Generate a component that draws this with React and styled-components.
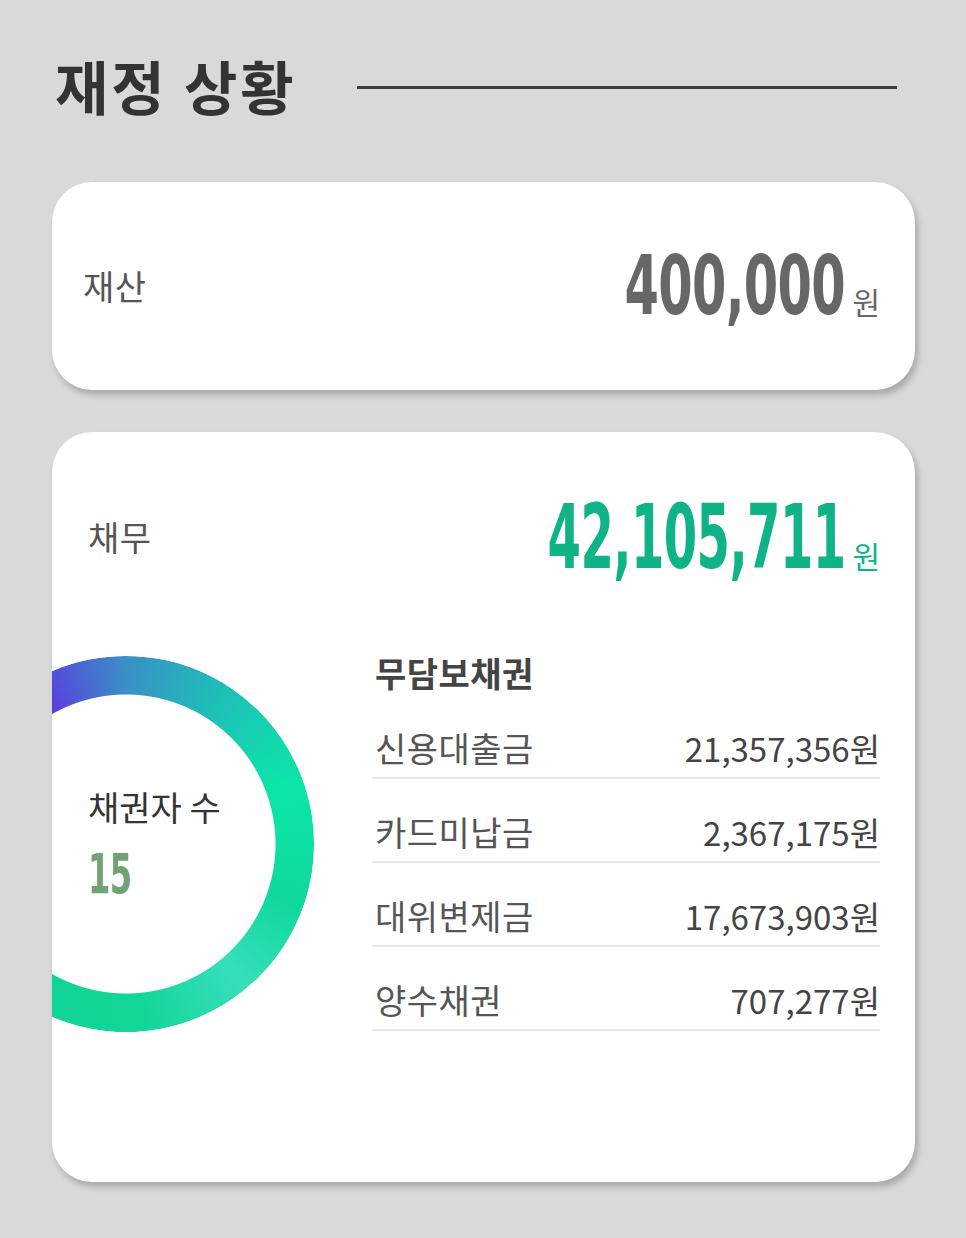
import React from "react";
import styled, { createGlobalStyle } from "styled-components";

const GlobalStyle = createGlobalStyle`
  body {
    margin: 0;
    background: #d9d9d9;
    font-family: "Noto Sans CJK KR", "Noto Sans", sans-serif;
  }
`;

const Page = styled.div`
  padding: 0 51px 60px 52px;
`;

const TitleRow = styled.div`
  display: flex;
  align-items: center;
  gap: 60px;
  padding: 50px 18px 0 3px;
  height: 70px;
`;

const Title = styled.h1`
  margin: 0;
  font-size: 58px;
  font-weight: 700;
  line-height: 70px;
  color: #333;
  letter-spacing: 3px;
`;

const TitleLine = styled.div`
  flex: 1;
  height: 3px;
  background: #3d3d3d;
  margin-top: 4px;
`;

const Card = styled.section`
  background: #fff;
  border-radius: 40px;
  box-shadow: 3px 5px 6px rgba(0, 0, 0, 0.22);
  overflow: hidden;
  box-sizing: border-box;
  height: ${(p) => p.height}px;
  margin-top: ${(p) => p.gap}px;
  padding: ${(p) => p.pad};
`;

const HeaderRow = styled.div`
  display: flex;
  justify-content: space-between;
  align-items: center;
  height: ${(p) => p.height || 70}px;
`;

const Label = styled.span`
  font-size: 34px;
  color: #555;
  line-height: 40px;
  letter-spacing: 0.5px;
`;

const Amount = styled.div`
  display: flex;
  align-items: baseline;
  color: ${(p) => p.color};
`;

const BigNumber = styled.span`
  display: inline-block;
  font-family: "DejaVu Sans Condensed", "DejaVu Sans", sans-serif;
  font-weight: 700;
  font-size: ${(p) => p.size}px;
  line-height: 1;
  letter-spacing: -1px;
  transform: scaleX(${(p) => p.sx});
  transform-origin: ${(p) => p.origin || "right"} center;
  color: ${(p) => p.color || "inherit"};
`;

const Won = styled.span`
  font-size: 30px;
  margin-left: 7px;
  line-height: 1;
`;

const Body = styled.div`
  display: grid;
  grid-template-columns: 376px 1fr;
  column-gap: 58px;
  margin: 79px 0 0 -150px;
`;

const Donut = styled.div`
  position: relative;
  width: 376px;
  height: 376px;
  margin-top: 5px;
  display: flex;
  flex-direction: column;
  justify-content: center;
  padding-left: 150px;
  box-sizing: border-box;
`;

const Ring = styled.div`
  position: absolute;
  inset: 0;
  border-radius: 50%;
  background: conic-gradient(
    from 0deg,
    #3a90c6 0deg,
    #1fbcb8 30deg,
    #0ce6a8 70deg,
    #10d89c 110deg,
    #36dfbb 140deg,
    #12d598 175deg,
    #10d496 215deg,
    #5b3ae0 330deg,
    #3a90c6 360deg
  );
  -webkit-mask: radial-gradient(circle, transparent 149px, #000 150px);
  mask: radial-gradient(circle, transparent 149px, #000 150px);
`;

const DonutLabel = styled.span`
  position: relative;
  font-size: 34px;
  color: #333;
  line-height: 40px;
`;

const DonutCount = styled.div`
  position: relative;
  margin-top: 20px;
`;

const List = styled.div`
  display: flex;
  flex-direction: column;
`;

const ListTitle = styled.h2`
  margin: 0;
  font-size: 34px;
  font-weight: 700;
  color: #444;
  line-height: 44px;
  padding-left: 3px;
  letter-spacing: 0.5px;
`;

const Row = styled.div`
  display: flex;
  justify-content: space-between;
  align-items: center;
  height: 84px;
  box-sizing: border-box;
  padding: 38px 0 14px 3px;
  border-bottom: 2px solid #e6e6e6;
`;

const RowLabel = styled.span`
  font-size: 34px;
  color: #555;
  line-height: 32px;
  letter-spacing: 0.5px;
`;

const RowValue = styled.span`
  font-size: 33px;
  color: #444;
  line-height: 32px;
`;

const debts = [
  { name: "신용대출금", value: "21,357,356" },
  { name: "카드미납금", value: "2,367,175" },
  { name: "대위변제금", value: "17,673,903" },
  { name: "양수채권", value: "707,277" },
];

export default function App() {
  return (
    <>
      <GlobalStyle />
      <Page>
        <TitleRow>
          <Title>재정 상황</Title>
          <TitleLine />
        </TitleRow>

        <Card height={208} gap={62} pad="0 35px 0 31px">
          <HeaderRow height={208}>
            <Label>재산</Label>
            <Amount color="#676767">
              <BigNumber size={82} sx={0.67}>400,000</BigNumber>
              <Won>원</Won>
            </Amount>
          </HeaderRow>
        </Card>

        <Card height={750} gap={42} pad="70px 35px 0 36px">
          <HeaderRow>
            <Label>채무</Label>
            <Amount color="#10b385">
              <BigNumber size={89} sx={0.6}>42,105,711</BigNumber>
              <Won>원</Won>
            </Amount>
          </HeaderRow>

          <Body>
            <Donut>
              <Ring />
              <DonutLabel>채권자 수</DonutLabel>
              <DonutCount>
                <BigNumber size={55} sx={0.65} origin="left" color="#72a274">
                  15
                </BigNumber>
              </DonutCount>
            </Donut>

            <List>
              <ListTitle>무담보채권</ListTitle>
              {debts.map((d) => (
                <Row key={d.name}>
                  <RowLabel>{d.name}</RowLabel>
                  <RowValue>{d.value}원</RowValue>
                </Row>
              ))}
            </List>
          </Body>
        </Card>
      </Page>
    </>
  );
}
